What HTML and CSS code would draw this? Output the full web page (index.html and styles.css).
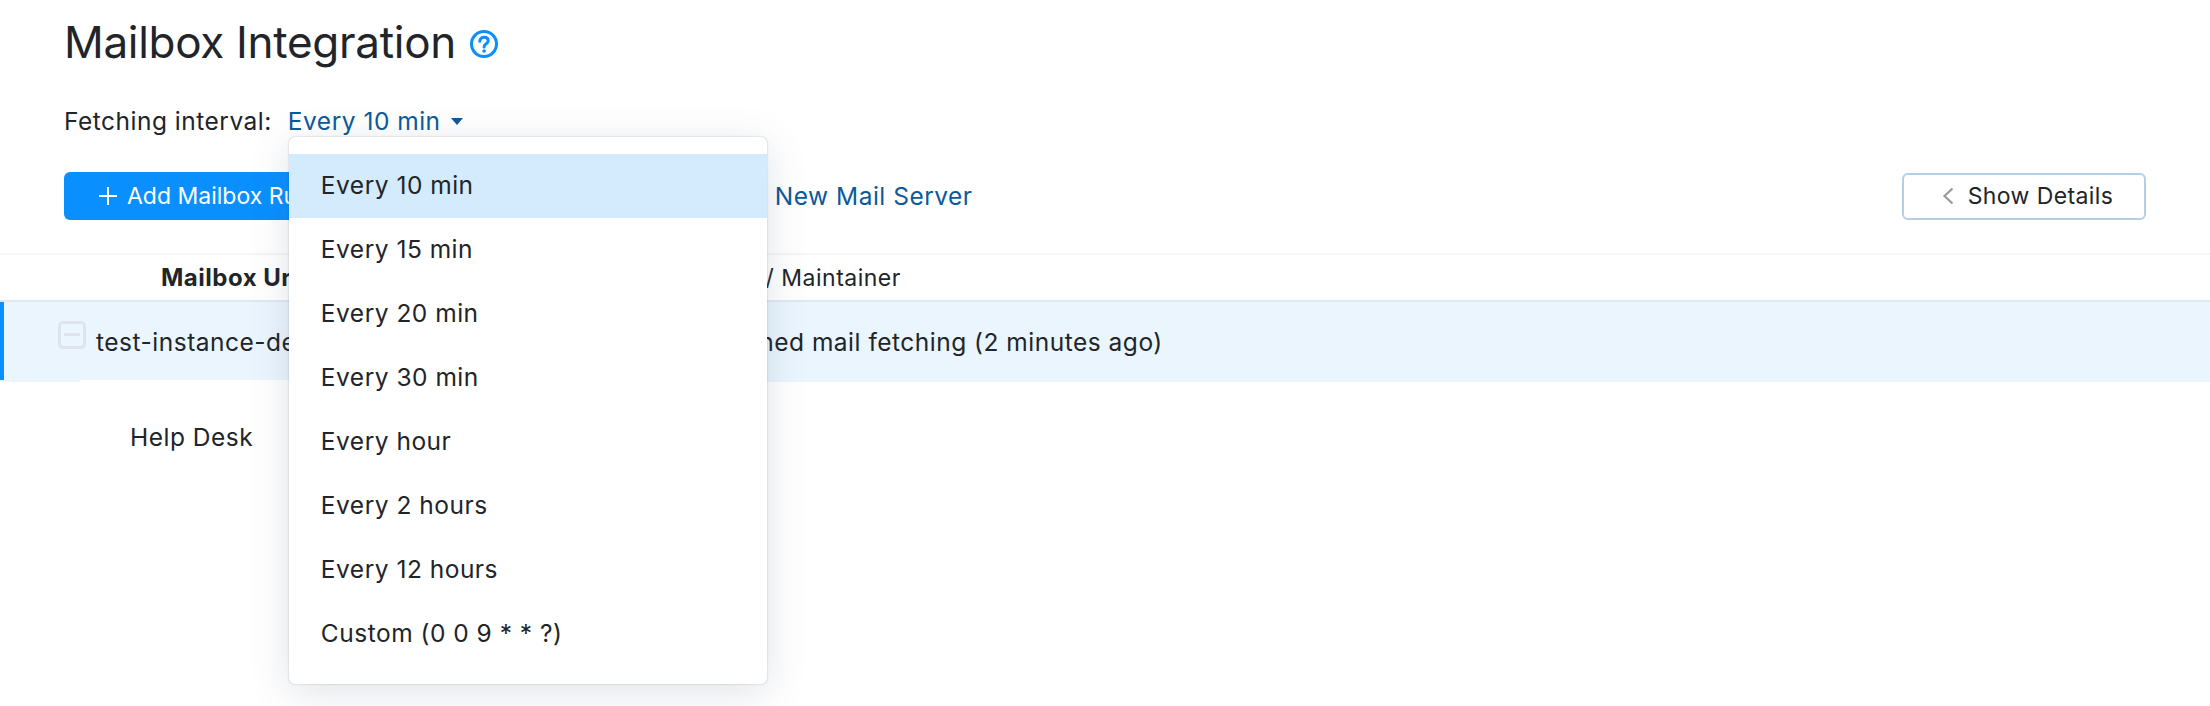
FILE: index.html
```html
<!DOCTYPE html>
<html lang="en">
<head>
    <meta charset="UTF-8">
    <title>Mailbox Integration</title>
    <link rel="stylesheet" href="styles.css">
</head>
<body>
    <div class="head">
        <div class="title-row">
            <h1>Mailbox Integration</h1>
            <svg class="help-icon" width="28" height="28" viewBox="0 0 28 28" fill="none">
                <circle cx="14" cy="14" r="12.5" stroke="#0a8fff" stroke-width="3"/>
                <path d="M9.800 11.200c0-2.500 1.900-4 4.300-4s4.100 1.400 4.100 3.500c0 1.700-1 2.600-2.200 3.400-1.200.8-1.900 1.400-1.900 2.800" stroke="#0a8fff" stroke-width="3" stroke-linecap="round"/>
                <circle cx="14.100" cy="21" r="1.800" fill="#0a8fff"/>
            </svg>
        </div>
        <div class="interval-row">
            <span>Fetching interval:</span>
            <div class="dropdown">
                <a class="link">Every 10 min</a>
                <span class="caret"></span>
                <ul class="menu">
                    <li class="active">Every 10 min</li>
                    <li>Every 15 min</li>
                    <li>Every 20 min</li>
                    <li>Every 30 min</li>
                    <li>Every hour</li>
                    <li>Every 2 hours</li>
                    <li>Every 12 hours</li>
                    <li>Custom (0 0 9 * * ?)</li>
                </ul>
            </div>
        </div>
        <div class="actions">
            <button class="btn-primary">
                <svg width="20" height="20" viewBox="0 0 20 20"><path d="M10 1v18M1 10h18" stroke="#fff" stroke-width="2"/></svg>
                Add Mailbox Rule
            </button>
            <a class="link new-server">Add New Mail Server</a>
            <button class="btn-details">
                <svg width="12" height="18" viewBox="0 0 12 18" fill="none"><path d="M10.500 1.500 2.500 9l8 7.500" stroke="#999" stroke-width="2.200"/></svg>
                Show Details
            </button>
        </div>
    </div>
    <div class="table">
        <div class="table-head">
            <div class="col-url">Mailbox Url</div>
            <div class="col-owner">Owner / Maintainer</div>
        </div>
        <div class="table-row">
            <span class="checkbox"></span>
            <span class="instance">test-instance-demo</span>
            <span class="status">Finished mail fetching (2 minutes ago)</span>
        </div>
        <div class="sub-row">Help Desk</div>
    </div>
</body>
</html>
```

FILE: styles.css
```css
html, body {
    height: 100%;
}
body {
    margin: 0;
    background: #fff;
    font-family: Inter, "Liberation Sans", sans-serif;
    font-size: 24.5px;
    letter-spacing: 0.5px;
    color: #212529;
    overflow: hidden;
}
.head {
    padding: 0 64px;
    height: 253px;
    box-sizing: border-box;
}
.title-row {
    display: flex;
    align-items: center;
    gap: 14px;
    height: 84px;
}
h1 {
    margin: 0;
    font-size: 44px;
    font-weight: 400;
    letter-spacing: -0.3px;
}
.help-icon {
    margin-top: 4px;
}
.interval-row {
    display: flex;
    align-items: center;
    gap: 16px;
    height: 74px;
}
.link {
    color: #0b5a9a;
}
.dropdown {
    position: relative;
    display: flex;
    align-items: center;
}
.caret {
    margin-left: 10px;
    border-left: 6px solid transparent;
    border-right: 6px solid transparent;
    border-top: 7px solid #0b5a9a;
}
.menu {
    position: absolute;
    left: 1px;
    top: 31px;
    z-index: 5;
    width: 478px;
    height: 547px;
    box-sizing: border-box;
    margin: 0;
    padding: 17px 0;
    list-style: none;
    background: #fff;
    border-radius: 6px;
    box-shadow: 0 0 2px rgba(60, 80, 110, 0.35), 0 8px 40px rgba(60, 80, 110, 0.16);
}
.menu li {
    height: 64px;
    line-height: 63px;
    padding-left: 32px;
}
.menu li.active {
    background: #d4ebfd;
}
.actions {
    display: flex;
    align-items: center;
    height: 48px;
    margin-top: 14px;
}
.btn-primary {
    display: flex;
    align-items: center;
    gap: 9px;
    width: 330px;
    height: 48px;
    padding: 0 0 0 34px;
    border: none;
    border-radius: 6px;
    background: #0a8fff;
    color: #fff;
    font: inherit;
    font-size: 23px;
    letter-spacing: 0;
}
.new-server {
    margin-left: 325px;
    margin-right: auto;
}
.btn-details {
    display: flex;
    align-items: center;
    justify-content: center;
    gap: 14px;
    width: 244px;
    height: 47px;
    padding-left: 13px;
    border: 2px solid #b3cfe6;
    border-radius: 6px;
    background: #fff;
    color: #212529;
    font: inherit;
    font-size: 23px;
    letter-spacing: 0.4px;
}
.table-head {
    display: flex;
    align-items: center;
    height: 49px;
    border-top: 2px solid #f5f5f5;
    border-bottom: 2px solid #e2e8f0;
    box-sizing: border-box;
    font-size: 23px;
    letter-spacing: 0.5px;
}
.col-url {
    width: 684px;
    padding-left: 161px;
    box-sizing: border-box;
    font-size: 24px;
    font-weight: 700;
}
.table-row {
    position: relative;
    display: flex;
    align-items: center;
    height: 80px;
    background: #eaf5fe;
}
.table-row::before {
    content: "";
    position: absolute;
    left: 0;
    top: 0;
    bottom: 2px;
    width: 4px;
    background: #0a8fff;
}
.table-row::after {
    content: "";
    position: absolute;
    left: 80px;
    bottom: 0;
    width: 220px;
    height: 2px;
    background: #fff;
}
.checkbox {
    position: relative;
    width: 28px;
    height: 28px;
    box-sizing: border-box;
    margin: -14px 0 0 58px;
    border: 3px solid #dde4ec;
    border-radius: 5px;
}
.checkbox::after {
    content: "";
    position: absolute;
    left: 3px;
    right: 3px;
    top: 9px;
    height: 3px;
    background: #dde4ec;
}
.instance {
    width: 607px;
    margin-left: 10px;
}
.sub-row {
    padding: 40px 0 0 130px;
}
```
